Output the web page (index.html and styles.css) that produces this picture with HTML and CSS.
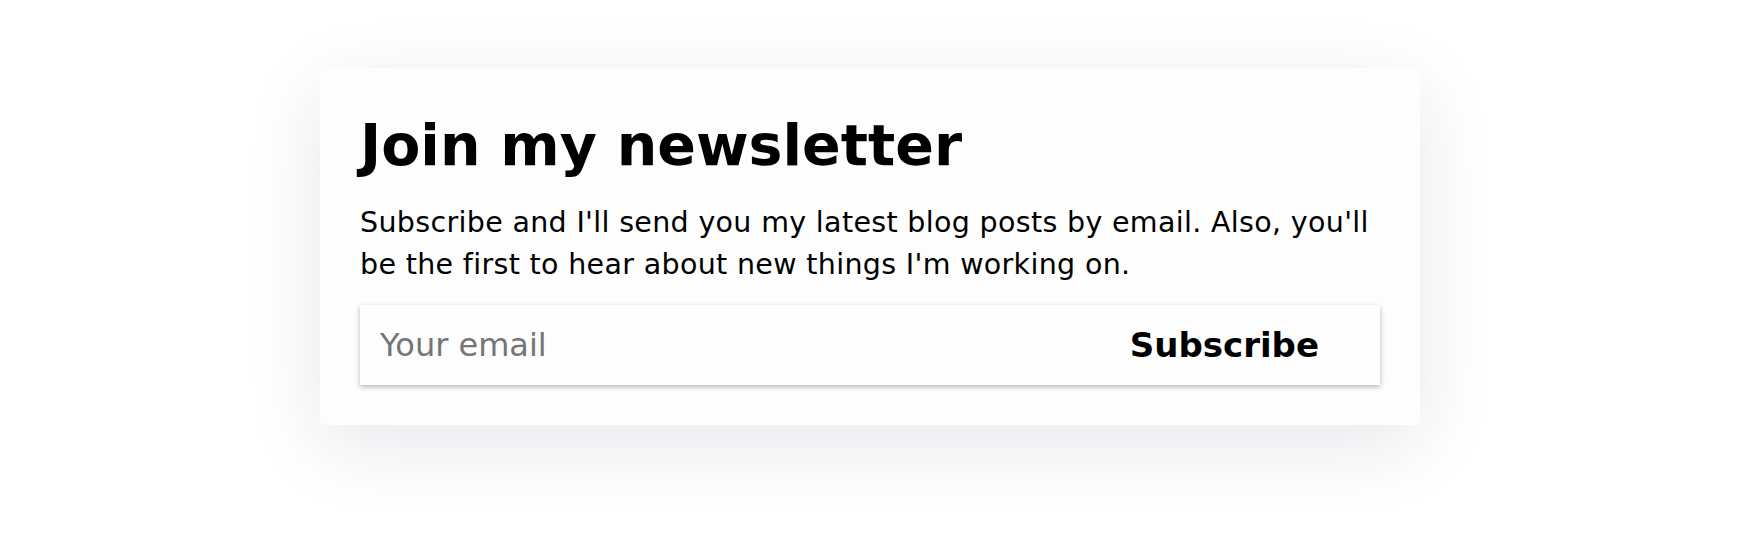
FILE: index.html
```html
<!DOCTYPE html>
<html lang="en">
<head>
<meta charset="utf-8">
<title>Newsletter</title>
<link rel="stylesheet" href="styles.css">
</head>
<body>
<main class="page">
  <section class="card">
    <h1 class="title">Join my newsletter</h1>
    <p class="lead">Subscribe and I'll send you my latest blog posts by email. Also, you'll be the first to hear about new things I'm working on.</p>
    <form class="signup">
      <input class="email" type="email" placeholder="Your email">
      <button class="submit" type="button">Subscribe</button>
    </form>
  </section>
</main>
</body>
</html>
```

FILE: styles.css
```css
html, body {
  margin: 0;
  padding: 0;
  background: #ffffff;
}
body {
  font-family: "DejaVu Sans", "Noto Sans", sans-serif;
  color: #000;
}
.page {
  display: flex;
  justify-content: center;
  align-items: flex-start;
  box-sizing: border-box;
  min-height: 544px;
  padding: 68px 16px 0 0;
}
.card {
  width: 1100px;
  box-sizing: border-box;
  padding: 40px;
  background: #fdfdfd;
  border-radius: 6px;
  box-shadow: 0 20px 80px rgba(30, 30, 70, 0.10);
}
.title {
  margin: 3px 0 0;
  font-size: 57px;
  line-height: 1.2;
  font-weight: 700;
}
.lead {
  margin: 23px 0 0;
  font-size: 28.5px;
  line-height: 42px;
  letter-spacing: 0.33px;
}
.signup {
  display: flex;
  margin-top: 19px;
  height: 80px;
  background: #fdfdfd;
  box-shadow: 0 2px 5px rgba(0, 0, 0, 0.28);
}
.email {
  flex: 1;
  min-width: 0;
  border: none;
  outline: none;
  background: transparent;
  padding: 0 20px;
  font-family: inherit;
  font-size: 32px;
  color: #000;
}
.email::placeholder {
  color: #757575;
}
.submit {
  border: none;
  background: transparent;
  padding: 0 61px 0 40px;
  font-family: inherit;
  font-size: 34px;
  font-weight: 700;
  color: #000;
  cursor: pointer;
}
```
